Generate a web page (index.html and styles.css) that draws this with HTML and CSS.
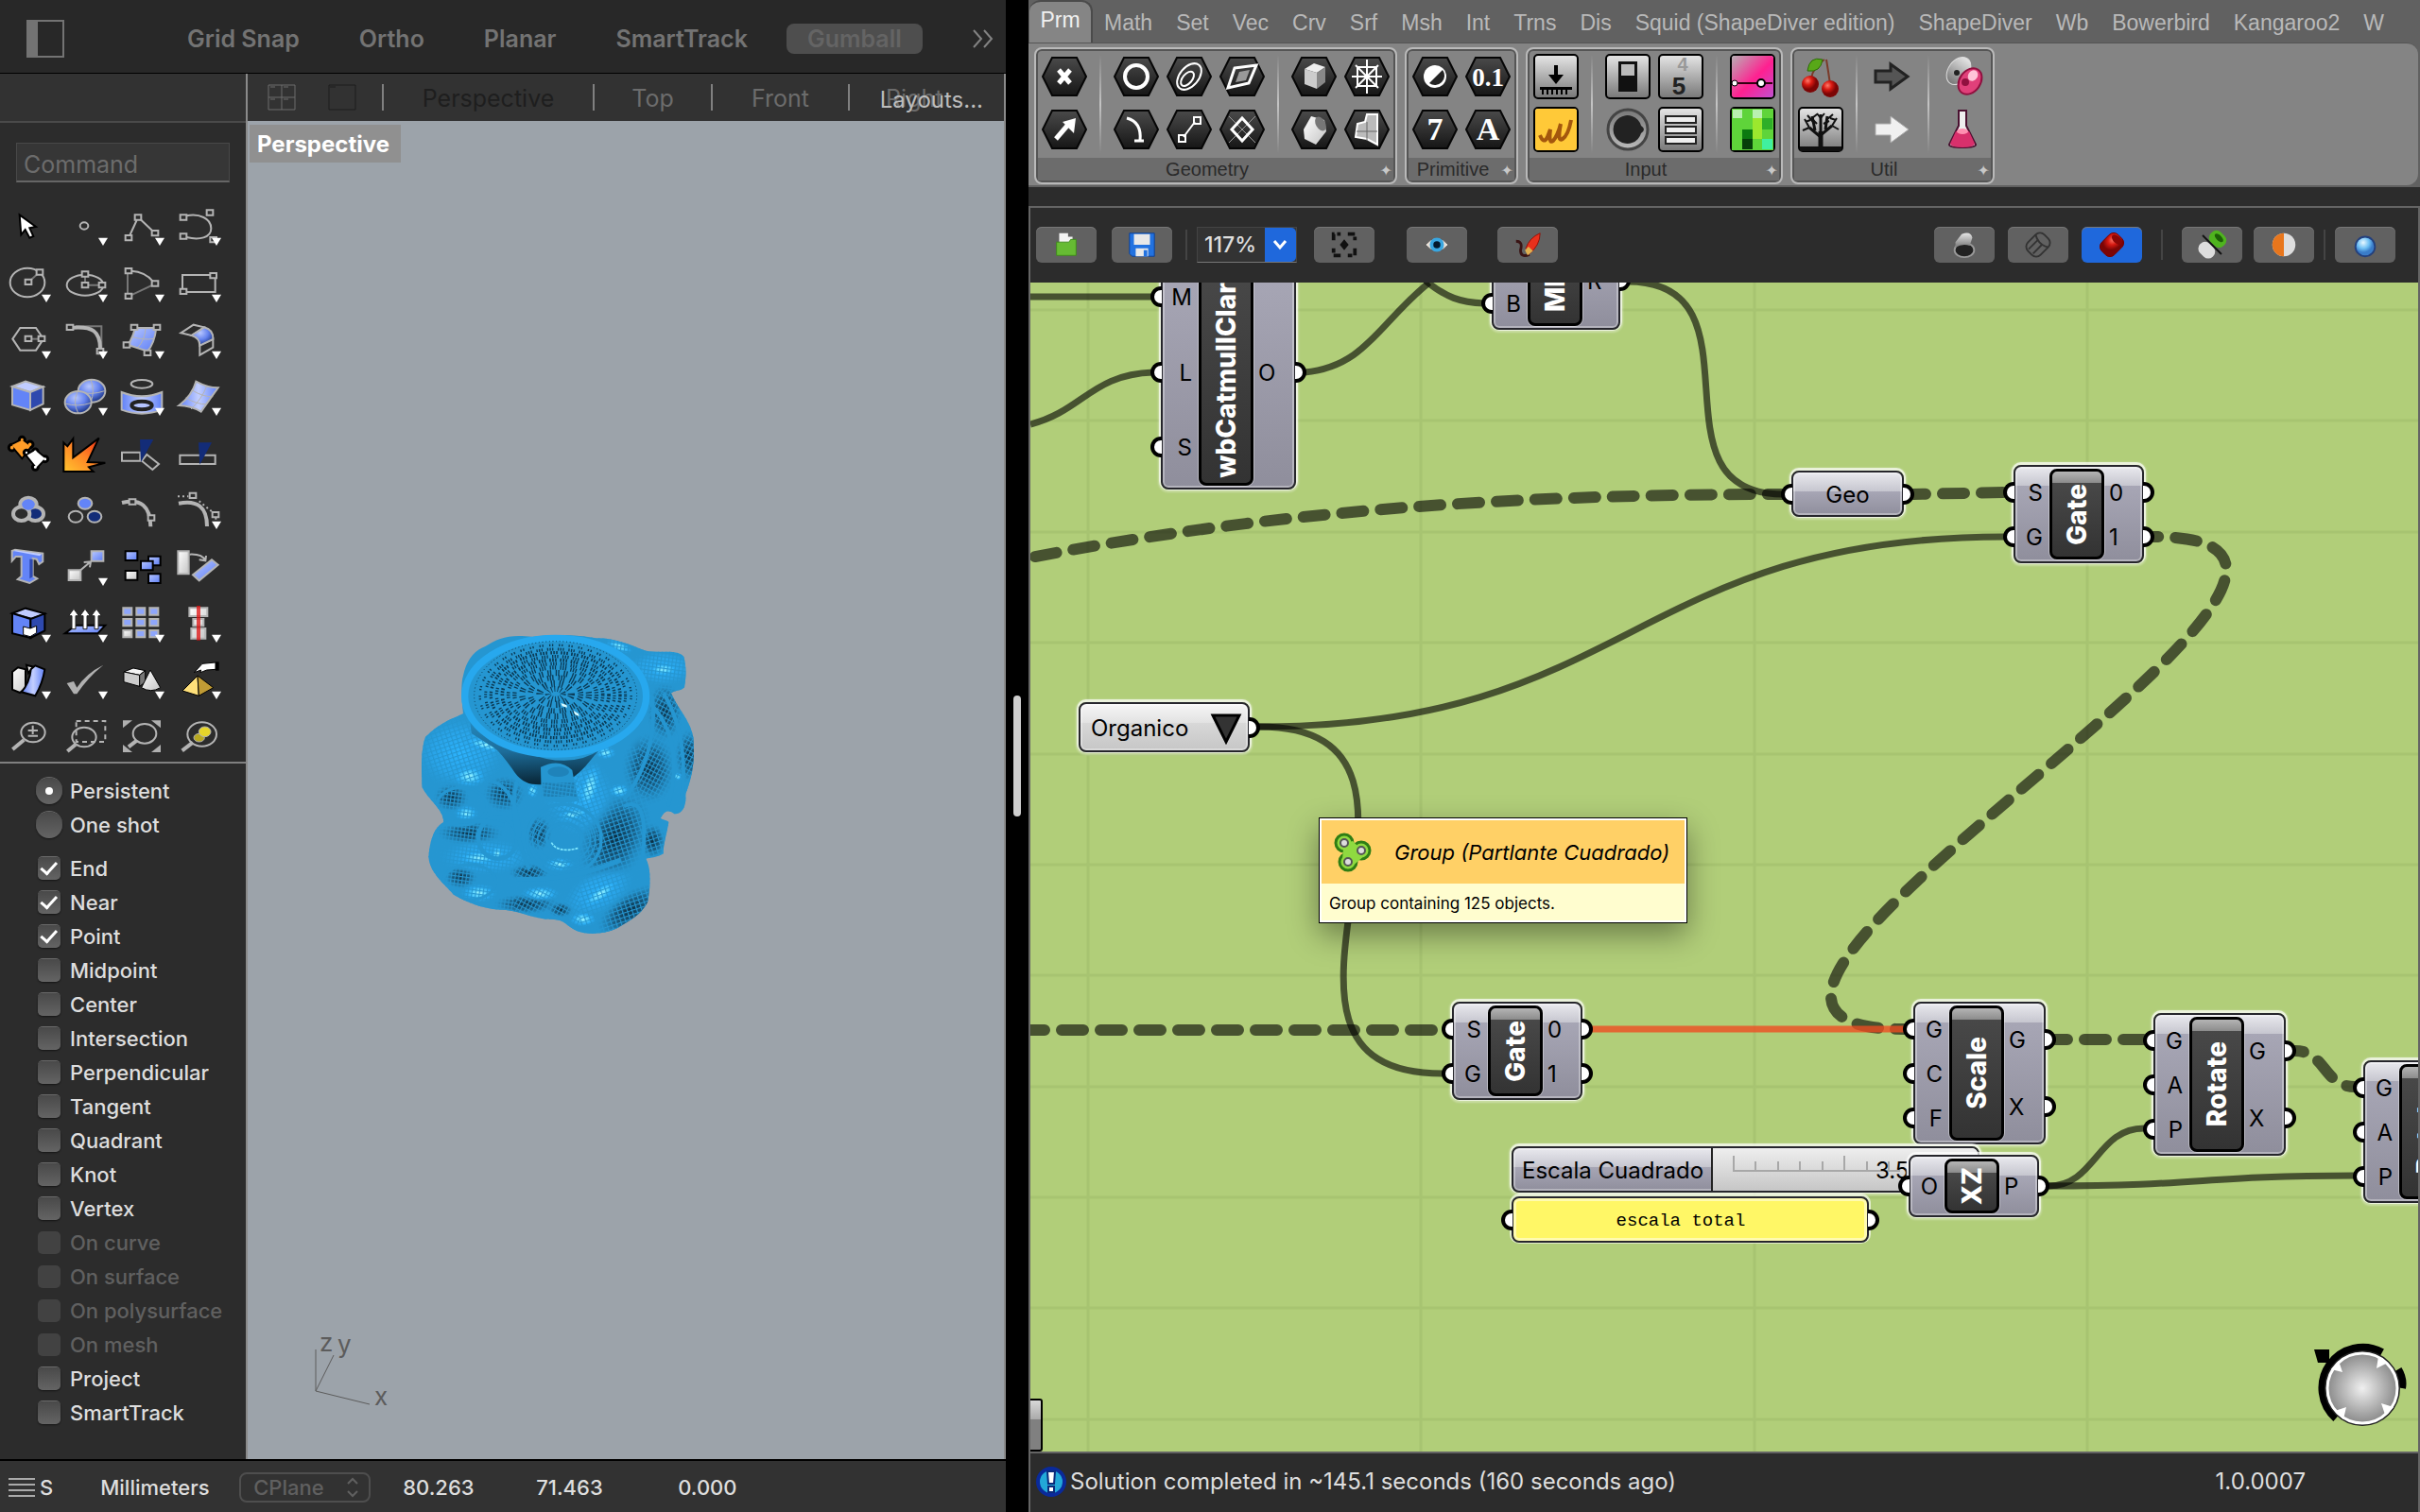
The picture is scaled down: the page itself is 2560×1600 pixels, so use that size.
FILE: index.html
```html
<!DOCTYPE html>
<html lang="en">
<head>
<meta charset="utf-8">
<title>Rhino and Grasshopper</title>
<link rel="stylesheet" href="styles.css">
</head>
<body>
<svg class="defs" aria-hidden="true">
  <defs>
    <linearGradient id="blue" x1="0" y1="0" x2="1" y2="1"><stop offset="0" stop-color="#b9c8ff"/><stop offset="1" stop-color="#5c7df5"/></linearGradient>
    <linearGradient id="blueH"><stop offset="0" stop-color="#5f80f8"/><stop offset=".5" stop-color="#c3cfff"/><stop offset="1" stop-color="#5f80f8"/></linearGradient>
    <radialGradient id="ball" cx=".4" cy=".3" r=".75"><stop offset="0" stop-color="#b9c8ff"/><stop offset=".5" stop-color="#6583ee"/><stop offset="1" stop-color="#132c78"/></radialGradient>
    <linearGradient id="fire" x1="0" y1="1" x2="1" y2="0"><stop offset="0" stop-color="#ffc62f"/><stop offset=".5" stop-color="#ff8225"/><stop offset="1" stop-color="#f02010"/></linearGradient>
    <linearGradient id="white" x1="0" y1="0" x2="1" y2="1"><stop offset="0" stop-color="#fff"/><stop offset="1" stop-color="#c4c4c4"/></linearGradient>
    <linearGradient id="steel" x1="0" y1="0" x2="0" y2="1"><stop offset="0" stop-color="#777"/><stop offset="1" stop-color="#bbb"/></linearGradient>
    <linearGradient id="steelDown" x1="0" y1="0" x2="0" y2="1"><stop offset="0" stop-color="#e6e6e6"/><stop offset="1" stop-color="#777"/></linearGradient>
    <linearGradient id="hexFill" x1="0" y1="0" x2="0" y2="1"><stop offset="0" stop-color="#4a4a4a"/><stop offset="1" stop-color="#161616"/></linearGradient>
    <linearGradient id="pink" x1="0" y1="0" x2="1" y2="1"><stop offset="0" stop-color="#b9b0b5"/><stop offset=".55" stop-color="#ff2090"/><stop offset="1" stop-color="#c050d0"/></linearGradient>
    <radialGradient id="knob"><stop offset="0" stop-color="#f0f0f0"/><stop offset="1" stop-color="#858585"/></radialGradient>
    <radialGradient id="redBall" cx=".35" cy=".3"><stop offset="0" stop-color="#ff7a6a"/><stop offset=".5" stop-color="#d81a12"/><stop offset="1" stop-color="#7c0505"/></radialGradient>
    <radialGradient id="skyBall" cx=".4" cy=".3"><stop offset="0" stop-color="#e8f8ff"/><stop offset=".6" stop-color="#6fc0f4"/><stop offset="1" stop-color="#3a7cc8"/></radialGradient>
    <path id="more" fill="#fff" d="M132 111h30l-15 25z"/>
    <path id="hex" fill="url(#hexFill)" stroke="#050505" stroke-width="2" d="M15 8h26l10 20-10 20H15L5 28z"/>
    <rect id="tile" x="5" y="5" width="46" height="46" rx="4" fill="url(#steelDown)" stroke="#000" stroke-width="2"/>
  </defs>
</svg>

<div class="desktop">
<section class="rhino" aria-label="Rhino">
  <header class="rhino-top">
    <button class="side-toggle" aria-label="Toggle sidebar"></button>
    <nav class="modes">
      <button>Grid Snap</button><button>Ortho</button><button>Planar</button><button>SmartTrack</button><button class="on">Gumball</button>
    </nav>
    <button class="chev" aria-label="More"><svg width="24" height="22" viewBox="0 0 24 22"><path d="M2 2l8 9-8 9M13 2l8 9-8 9"/></svg></button>
  </header>

  <div class="rhino-main">
    <aside class="panel">
      <div class="panel-head"></div>
      <input class="command" type="text" placeholder="Command" aria-label="Command">
      <div class="tools">
        <button aria-label="Select"><svg viewBox="0 25 180 152"><path d="M62 63l52 38-20 4 12 26-12 5-14-26-13 16z" fill="#fff" stroke="#000" stroke-width="2"/></svg></button>
        <button aria-label="Point"><svg viewBox="180 25 180 152"><ellipse cx="267" cy="98" rx="13" ry="11"/><use href="#more" x="180" y="25"/></svg></button>
        <button aria-label="Polyline"><svg viewBox="360 25 180 152"><path d="M412 128l22-48M446 78l38 36"/><path d="M428 63h20v16h-20zM398 128h20v16h-20zM482 113h20v16h-20z"/><use href="#more" x="360" y="25"/></svg></button>
        <button aria-label="Curve"><svg viewBox="540 25 180 152"><path d="M592 66c40-8 78 8 78 40 0 30-38 38-78 28"/><path d="M572 63h20v16h-20zM656 48h20v16h-20zM572 123h20v16h-20zM667 134h20v16h-20z"/><use href="#more" x="540" y="25"/></svg></button>

        <button aria-label="Circle"><svg viewBox="0 177 180 152"><ellipse cx="87" cy="250" rx="55" ry="46"/><path class="dim" d="M98 242l20-18"/><path class="bg" d="M80 240h20v16H80zM116 209h20v16h-20z"/><use href="#more" y="177"/></svg></button>
        <button aria-label="Ellipse"><svg viewBox="180 177 180 152"><ellipse cx="270" cy="258" rx="58" ry="33"/><path class="dim" d="M270 230v20M280 258h34"/><path class="bg" d="M260 215h20v16h-20zM260 250h20v16h-20zM314 250h20v16h-20z"/><use href="#more" x="180" y="177"/></svg></button>
        <button aria-label="Arc"><svg viewBox="360 177 180 152"><path class="dim" d="M405 220v66M416 290l68-32"/><path d="M416 213c32 2 56 16 70 34"/><path d="M398 205h20v16h-20zM398 285h20v16h-20zM482 245h20v16h-20z"/><use href="#more" x="360" y="177"/></svg></button>
        <button aria-label="Rectangle"><svg viewBox="540 177 180 152"><path d="M579 226h104v54H579z"/><path class="bg" d="M667 220h20v16h-20zM572 270h20v16h-20z"/><use href="#more" x="540" y="177"/></svg></button>

        <button aria-label="Polygon"><svg viewBox="0 329 180 152"><path d="M40 401l24-35h50l24 35-24 36H64z"/><path class="dim" d="M100 401h24"/><path class="bg" d="M80 392h20v16H80zM122 392h20v16h-20z"/><use href="#more" y="329"/></svg></button>
        <button aria-label="Fillet"><svg viewBox="180 329 180 152"><path class="dim" d="M240 361h82v70"/><path stroke-width="4" d="M232 365c60-4 86 10 86 68"/><path d="M212 356h20v16h-20zM308 432h20v16h-20z"/><use href="#more" x="180" y="329"/></svg></button>
        <button aria-label="Surface"><svg viewBox="360 329 180 152"><path fill="url(#blue)" d="M428 366h68q-6 50-28 74l-62-20q18-28 22-54z"/><path class="seam" d="M462 368q-2 36-26 62M418 394q40 12 70 6"/><path class="bg" d="M416 356h20v16h-20zM488 356h20v16h-20zM392 412h20v16h-20zM458 437h20v16h-20z"/><use href="#more" x="360" y="329"/></svg></button>
        <button aria-label="Blend surface"><svg viewBox="540 329 180 152"><path d="M574 382l40-26 34 8-40 26zM634 420l42-20v28l-42 24z"/><path fill="url(#ball)" d="M648 364q30 8 28 38l-42 20q0-24-26-32z"/><use href="#more" x="540" y="329"/></svg></button>

        <button aria-label="Box"><svg viewBox="0 481 180 152"><path fill="#c0ccff" d="M39 524l42-16 56 17-41 17z"/><path fill="#6384f7" d="M39 524l57 18v57l-57-17z"/><path fill="#2e49ae" d="M96 542l41-17v54l-41 20z"/><use href="#more" y="481"/></svg></button>
        <button aria-label="Solids"><svg viewBox="180 481 180 152"><ellipse cx="291" cy="538" rx="43" ry="36" fill="url(#ball)"/><path class="seam" d="M250 542q40 10 82-4M288 502q14 36 0 72"/><ellipse cx="248" cy="574" rx="42" ry="35" fill="url(#ball)"/><path class="seam" d="M207 578q40 12 82-2M246 540q-16 36 2 68"/><use href="#more" x="180" y="481"/></svg></button>
        <button aria-label="Project"><svg viewBox="360 481 180 152"><ellipse cx="450" cy="516" rx="34" ry="13"/><path fill="url(#blueH)" d="M386 542q64 26 128 0v56q-64 24-128 0z"/><ellipse cx="450" cy="584" rx="32" ry="13" fill="#b5c4ff" stroke="#222" stroke-width="4"/><use href="#more" x="360" y="481"/></svg></button>
        <button aria-label="Mesh"><svg viewBox="540 481 180 152"><path fill="url(#blueH)" d="M622 508q36 20 70 20-22 30-54 76-34-20-70-20 42-32 54-76z"/><path class="seam" d="M656 522q-14 40-50 74M610 536q36 22 66 20M590 560q36 22 66 20"/><use href="#more" x="540" y="481"/></svg></button>

        <button aria-label="Plugins"><svg viewBox="0 633 180 152"><g fill="#ff9d28" stroke="#000" stroke-width="3"><path d="M36 682l34-18 28 22-28 36z"/><circle cx="70" cy="665" r="9"/><circle cx="38" cy="690" r="10"/><circle cx="95" cy="680" r="10"/></g><path fill="#ff9d28" stroke="none" d="M38 682l32-16 26 20-26 34z"/><g fill="#fff" stroke="#000" stroke-width="3"><path d="M84 714l28-16 32 26-28 30z"/><circle cx="112" cy="702" r="8"/><circle cx="84" cy="706" r="8"/><circle cx="143" cy="726" r="9"/><circle cx="112" cy="752" r="9"/></g><path fill="#fff" stroke="none" d="M86 714l26-15 30 25-26 28z"/></svg></button>
        <button aria-label="Explode"><svg viewBox="180 633 180 152"><path fill="url(#fire)" stroke="#000" stroke-width="2" d="M202 674l12 12 18-24 0 60 82-62-36 76 56 2-52 14 14 14H202z"/></svg></button>
        <button aria-label="Trim"><svg viewBox="360 633 180 152"><path d="M387 705h58v27h-58zM466 712l38 30-20 18-34-28z"/><path class="navy" d="M444 664h43l-40 72z"/></svg></button>
        <button aria-label="Split"><svg viewBox="540 633 180 152"><path d="M571 714h112v28H571z"/><path class="navy" d="M630 674h42l-38 70z"/></svg></button>

        <button aria-label="Join"><svg viewBox="0 785 180 152"><ellipse cx="90" cy="843" rx="26" ry="22" stroke-width="4" fill="#6384f7"/><ellipse cx="112" cy="872" rx="26" ry="22" stroke-width="4" fill="#132c78"/><ellipse cx="68" cy="872" rx="26" ry="22" stroke-width="4" class="bg"/><ellipse cx="90" cy="843" rx="20" ry="17" stroke="none" fill="#6384f7"/><use href="#more" y="785"/></svg></button>
        <button aria-label="Ungroup"><svg viewBox="180 785 180 152"><ellipse cx="270" cy="839" rx="22" ry="18" fill="#6384f7"/><ellipse cx="240" cy="881" rx="22" ry="18"/><ellipse cx="300" cy="881" rx="22" ry="18" fill="#132c78"/></svg></button>
        <button aria-label="Edit points"><svg viewBox="360 785 180 152"><path stroke-width="4" d="M387 837q90-22 91 76"/><path class="bg" d="M410 826h20v16h-20zM470 877h20v16h-20z"/></svg></button>
        <button aria-label="Control points"><svg viewBox="540 785 180 152"><path stroke-width="4" d="M567 839q90-18 90 73"/><path stroke-dasharray="2 3" d="M564 817h34M632 832l44 36M685 884v12"/><path d="M602 806h20v16h-20zM674 867h20v16h-20z"/><use href="#more" x="540" y="785"/></svg></button>

        <button aria-label="Text"><svg viewBox="0 937 180 152"><path fill="#6384f7" d="M38 962l10-4 88 12 0 26-12 8-8-16-12-2v56l14 8-24 14-38-12 12-10v-62l-18 0-12 14z"/><path fill="#2e49ae" stroke="none" d="M94 988l10 0v56l-10 6z"/><path fill="#c0ccff" stroke="none" d="M42 962l8-2 82 12-6 6z"/></svg></button>
        <button aria-label="Move"><svg viewBox="180 937 180 152"><path fill="url(#white)" d="M218 1023h38v32h-38z"/><path fill="url(#blue)" d="M290 963h38v31h-38z"/><path d="M254 1024l34-28M266 998l22-2-3 18"/><use href="#more" x="180" y="937"/></svg></button>
        <button aria-label="Copy"><svg viewBox="360 937 180 152"><g stroke="#000"><path fill="url(#blue)" d="M398 963h38v29h-38z"/><path fill="url(#blue)" d="M471 979h38v29h-38z"/><path fill="url(#blue)" d="M447 994h38v29h-38z"/><path fill="url(#blue)" d="M471 1035h38v29h-38z"/><path fill="url(#white)" d="M398 1025h38v29h-38z"/></g></svg></button>
        <button aria-label="Rotate"><svg viewBox="540 937 180 152"><path fill="url(#white)" d="M565 963h34v72h-34z"/><path fill="url(#blue)" d="M612 1038l60-48 20 16-60 50z"/><path d="M602 973q40-2 50 20M632 990l20 3 2-16"/></svg></button>

        <button aria-label="Boolean"><svg viewBox="0 1089 180 152"><g stroke="#000" stroke-width="2"><path fill="#c0ccff" d="M39 1132l42-16 61 17-41 17z"/><path fill="#6384f7" d="M39 1132l58 18v60l-58-14z"/><path fill="#2e49ae" d="M97 1150l45-17v54l-45 23z"/></g><path fill="#fff" stroke="#000" stroke-width="1" d="M74 1174l22 6 20-8v22l-20 12-22-6z"/><use href="#more" y="1089"/></svg></button>
        <button aria-label="Extrude"><svg viewBox="180 1089 180 152"><path fill="url(#blue)" stroke="#000" d="M206 1196l34-26h94l-24 26z"/><path fill="#fff" stroke="#222" stroke-width="1" d="M228 1182v-42h-10l16-22 16 22h-10v42zM264 1182v-42h-10l16-22 16 22h-10v42zM300 1182v-42h-10l16-22 16 22h-10v42z"/><use href="#more" x="180" y="1089"/></svg></button>
        <button aria-label="Array"><svg viewBox="360 1089 180 152"><g fill="#8ea6fb"><path d="M391 1115h27v22h-27zM433 1115h27v22h-27zM475 1115h27v22h-27zM391 1150h27v22h-27zM433 1150h27v22h-27zM475 1150h27v22h-27zM433 1186h27v22h-27zM475 1186h27v22h-27z"/></g><path fill="url(#white)" d="M391 1186h27v22h-27z"/><use href="#more" x="360" y="1089"/></svg></button>
        <button aria-label="Align"><svg viewBox="540 1089 180 152"><path fill="url(#white)" d="M601 1115h57v26h-57zM613 1150h33v22h-33zM607 1180h45v32h-45z"/><path fill="#e01010" opacity=".75" stroke="none" d="M624 1108h12v110h-12z"/><use href="#more" x="540" y="1089"/></svg></button>

        <button aria-label="Deform"><svg viewBox="0 1241 180 152"><g stroke="#000"><path fill="url(#white)" d="M39 1290l18-14 24 6 0 60-18 14-24-10zM84 1268l22 6-16 20z"/><path fill="url(#blueH)" d="M98 1282l14-12 30 12q-6 42-30 84l-44-12q26-30 30-72z"/></g><use href="#more" y="1241"/></svg></button>
        <button aria-label="Check"><svg viewBox="180 1241 180 152"><path fill="#b0b0b0" stroke="none" d="M212 1326l22-6 10 20q30-46 84-72-50 40-84 92h-10z"/><use href="#more" x="180" y="1241"/></svg></button>
        <button aria-label="Render"><svg viewBox="360 1241 180 152"><g stroke="#000" stroke-width="1"><path fill="#f4f4f4" d="M393 1290l30-12 38 8-18 14z"/><path fill="#ccc" d="M393 1290l50 10v36l-50-14z"/><path fill="#777" d="M443 1300l18-14v36l-18 14z"/><path fill="url(#white)" d="M477 1284l32 56q-30 18-60 0z"/></g><use href="#more" x="360" y="1241"/></svg></button>
        <button aria-label="Drag"><svg viewBox="540 1241 180 152"><path fill="#ffe07a" stroke="#000" stroke-width="1" d="M627 1302l-48 48 52 16z"/><path fill="#c09b35" stroke="#000" stroke-width="1" d="M627 1302l50 38-46 26z"/><path fill="#fff" stroke="#000" stroke-width="1" d="M616 1292l26-28 42-4v22l-28 2-20 8 2-8z"/><path fill="#000" stroke="none" d="M684 1258h11v28h-11z"/><use href="#more" x="540" y="1241"/></svg></button>

        <button aria-label="Zoom dynamic"><svg viewBox="0 1393 180 152"><ellipse cx="105" cy="1454" rx="38" ry="31"/><path stroke-width="4" d="M76 1478l-36 30"/><path d="M89 1448h31M104 1432v28M89 1465h31"/></svg></button>
        <button aria-label="Zoom window"><svg viewBox="180 1393 180 152"><ellipse cx="267" cy="1469" rx="38" ry="31"/><path stroke-width="4" d="M240 1492l-26 22"/><path stroke-dasharray="5 4" d="M242 1418h92v66h-92z"/></svg></button>
        <button aria-label="Zoom extents"><svg viewBox="360 1393 180 152"><ellipse cx="459" cy="1458" rx="37" ry="31"/><path stroke-width="4" d="M434 1480l-26 20"/><path fill="#b0b0b0" stroke="none" d="M390 1416h30l-30 24zM510 1416h-30l30 24zM390 1517h30l-30-24zM510 1517h-30l30-24z"/></svg></button>
        <button aria-label="Zoom selected"><svg viewBox="540 1393 180 152"><ellipse cx="641" cy="1460" rx="46" ry="38"/><ellipse cx="632" cy="1471" rx="17" ry="13" fill="#b8a820" stroke-width="1"/><ellipse cx="650" cy="1452" rx="19" ry="16" fill="#e6d52a" stroke-width="1"/><path stroke-width="4" d="M612 1486l-34 26"/></svg></button>
      </div>

      <div class="snaps">
        <label><input type="radio" name="persist" checked>Persistent</label>
        <label><input type="radio" name="persist">One shot</label>
      </div>
      <div class="snaps">
        <label><input type="checkbox" checked>End</label>
        <label><input type="checkbox" checked>Near</label>
        <label><input type="checkbox" checked>Point</label>
        <label><input type="checkbox">Midpoint</label>
        <label><input type="checkbox">Center</label>
        <label><input type="checkbox">Intersection</label>
        <label><input type="checkbox">Perpendicular</label>
        <label><input type="checkbox">Tangent</label>
        <label><input type="checkbox">Quadrant</label>
        <label><input type="checkbox">Knot</label>
        <label><input type="checkbox">Vertex</label>
        <label class="off"><input type="checkbox" disabled>On curve</label>
        <label class="off"><input type="checkbox" disabled>On surface</label>
        <label class="off"><input type="checkbox" disabled>On polysurface</label>
        <label class="off"><input type="checkbox" disabled>On mesh</label>
        <label><input type="checkbox">Project</label>
        <label><input type="checkbox">SmartTrack</label>
      </div>
    </aside>

    <div class="view">
      <nav class="views">
        <button class="ico" aria-label="Four views"><svg width="30" height="28" viewBox="0 0 30 28"><path d="M1 1h28v26H1zM15 1v26M1 14h28M3 3h5M17 3h5M3 16h5M17 16h5"/></svg></button>
        <button class="ico dark" aria-label="Single view"><svg width="30" height="28" viewBox="0 0 30 28"><path d="M1 1h28v26H1zM2 3h6"/></svg></button>
        <button class="tab current">Perspective</button>
        <button class="tab top">Top</button>
        <button class="tab front">Front</button>
        <button class="tab right">Right</button>
        <button class="layouts">Layouts...</button>
      </nav>
      <div class="viewport">
        <span class="view-name">Perspective</span>
        <svg class="model" viewBox="0 0 1140 1140" role="img" aria-label="Organic planter mesh">
          <defs>
            <pattern id="m1" width="12" height="12" patternUnits="userSpaceOnUse" patternTransform="rotate(8)"><path d="M0 0h12M0 0v12" stroke="#2596d1" stroke-width="7" fill="none"/></pattern>
            <pattern id="m2" width="12" height="14" patternUnits="userSpaceOnUse" patternTransform="rotate(28)"><path d="M0 0h12M0 0v14" stroke="#2596d1" stroke-width="7" fill="none"/></pattern>
            <pattern id="m3" width="15" height="13" patternUnits="userSpaceOnUse" patternTransform="rotate(-18)"><path d="M0 0h15M0 0v13" stroke="#2596d1" stroke-width="7" fill="none"/></pattern>
            <radialGradient id="hi"><stop offset="0" stop-color="#a0f8ff"/><stop offset=".3" stop-color="#60d8ff"/><stop offset=".6" stop-color="#2bb0fa" stop-opacity=".8"/><stop offset="1" stop-color="#2596d1" stop-opacity="0"/></radialGradient>
            <radialGradient id="swell"><stop offset="0" stop-color="#2cb4ff"/><stop offset=".6" stop-color="#2ba9f0" stop-opacity=".7"/><stop offset="1" stop-color="#2596d1" stop-opacity="0"/></radialGradient>
            <radialGradient id="lo"><stop offset="0" stop-color="#0a2c40"/><stop offset=".5" stop-color="#164f70" stop-opacity=".8"/><stop offset="1" stop-color="#2596d1" stop-opacity="0"/></radialGradient>
            <linearGradient id="cone" x1="0" y1="0" x2=".1" y2="1"><stop offset="0" stop-color="#2488bd"/><stop offset=".5" stop-color="#1d6d9a"/><stop offset="1" stop-color="#0a2a3c"/></linearGradient>
            <clipPath id="body"><path d="M270 345C265 300 262 250 270 225 280 175 305 145 340 132 380 105 420 92 490 102 560 92 640 96 690 106 750 104 800 128 850 146 900 155 950 140 970 165 980 200 976 240 972 262 960 275 940 272 930 280 950 330 990 365 1000 420 1006 480 1000 540 976 600 978 640 968 662 940 664 928 652 910 650 900 672 888 682 910 680 922 690 918 720 905 760 905 790 885 803 860 803 850 806 868 840 864 900 855 945 830 990 800 1000 760 1026 710 1050 650 1048 620 1030 590 1010 585 998 545 998 500 998 460 975 400 968 350 970 290 950 240 920 200 875 165 850 160 800 165 740 180 705 208 690 208 650 160 620 140 580 137 530 135 460 150 420 180 390 210 370 250 355 270 345z"/></clipPath>
          </defs>
          <g clip-path="url(#body)">
            <rect width="1140" height="1140" fill="#2596d1"/>
            <g fill="url(#lo)">
              <ellipse cx="232" cy="612" rx="60" ry="48"/><ellipse cx="750" cy="740" rx="110" ry="170" transform="rotate(25 750 740)"/><ellipse cx="860" cy="520" rx="90" ry="120"/><ellipse cx="985" cy="480" rx="46" ry="90"/><ellipse cx="400" cy="600" rx="70" ry="60"/><ellipse cx="262" cy="865" rx="56" ry="40"/><ellipse cx="800" cy="970" rx="130" ry="60" transform="rotate(-35 800 970)"/><ellipse cx="290" cy="725" rx="110" ry="40"/><ellipse cx="910" cy="340" rx="60" ry="100"/><ellipse cx="510" cy="725" rx="44" ry="60"/><ellipse cx="870" cy="750" rx="46" ry="60"/><ellipse cx="470" cy="950" rx="110" ry="34"/><ellipse cx="580" cy="968" rx="44" ry="26"/><ellipse cx="480" cy="850" rx="70" ry="30"/>
            </g>
            <g fill="url(#swell)">
              <ellipse cx="260" cy="470" rx="150" ry="120"/><ellipse cx="640" cy="610" rx="120" ry="130"/><ellipse cx="340" cy="800" rx="150" ry="60"/><ellipse cx="700" cy="910" rx="130" ry="70" transform="rotate(-30 700 910)"/><ellipse cx="900" cy="200" rx="110" ry="60"/>
            </g>
            <g fill="url(#hi)">
              <ellipse cx="290" cy="545" rx="60" ry="38"/><ellipse cx="340" cy="445" rx="80" ry="22" transform="rotate(14 340 445)"/><ellipse cx="280" cy="662" rx="42" ry="28"/><ellipse cx="320" cy="803" rx="74" ry="26"/><ellipse cx="378" cy="790" rx="22" ry="30"/><ellipse cx="320" cy="915" rx="62" ry="32"/><ellipse cx="515" cy="917" rx="66" ry="26"/><ellipse cx="575" cy="824" rx="52" ry="24"/><ellipse cx="672" cy="580" rx="34" ry="90" transform="rotate(14 672 580)"/><ellipse cx="620" cy="665" rx="60" ry="22" transform="rotate(-12 620 665)"/><ellipse cx="705" cy="918" rx="80" ry="26" transform="rotate(-36 705 918)"/><ellipse cx="650" cy="998" rx="48" ry="26"/><ellipse cx="905" cy="205" rx="56" ry="24"/><ellipse cx="765" cy="132" rx="50" ry="18" transform="rotate(22 765 132)"/><ellipse cx="722" cy="470" rx="36" ry="22"/><ellipse cx="765" cy="590" rx="36" ry="24"/><ellipse cx="490" cy="590" rx="20" ry="26"/><ellipse cx="950" cy="545" rx="18" ry="14"/>
            </g>
            <path fill="url(#m1)" d="M0 560h430v580H0zM640 100h400v170H640z"/>
            <path fill="url(#m2)" d="M430 500h210v640H430zM830 270h310v340H830z"/>
            <path fill="url(#m3)" d="M640 450h190v690H640zM830 610h310v530H830zM0 340h430v220H0z"/>
            <g fill="none" stroke="#2596d1" stroke-width="5">
              <ellipse cx="590" cy="745" rx="118" ry="112" stroke-width="10"/><ellipse cx="590" cy="745" rx="100" ry="90"/><ellipse cx="590" cy="745" rx="84" ry="72"/><ellipse cx="590" cy="740" rx="56" ry="46" stroke-width="10"/><ellipse cx="380" cy="740" rx="62" ry="66" stroke-width="14"/><ellipse cx="265" cy="640" rx="80" ry="60" stroke-width="9"/><ellipse cx="290" cy="880" rx="84" ry="56" stroke-width="9"/><path d="M440 560q-30 120 40 280M780 640q80-40 60 160M360 560q80 20 90 180M850 300q130 120 70 340M905 280q80 130 60 330M870 290q20 180-90 330" stroke-width="12"/><path d="M440 870q170 10 330-60M400 700q-90-30-200 0" stroke-width="14"/>
            </g>
            <path d="M550 755q20 34 84 18" fill="none" stroke="#7fe8ff" stroke-width="5" stroke-dasharray="9 3"/>
          </g>
          <path fill="url(#cone)" d="M292 370Q560 560 705 460C680 480 660 520 622 545Q570 575 500 570 455 570 425 520 390 470 370 455L296 408z"/>
          <path fill="#2596d1" d="M516 515q60-30 100 10 10 60 22 96-60 20-120-10z"/><path fill="#1b6c9a" opacity=".6" d="M522 565h100l8 44H524z"/><path fill="url(#m1)" d="M520 560h110v55H520z"/><ellipse cx="572" cy="530" rx="34" ry="16" fill="#1f83ba"/>
          <ellipse cx="563" cy="290" rx="288" ry="184" fill="#2596d1" stroke="#27a8ee" stroke-width="22"/>
          <g fill="none" stroke="#0b3b56">
            <ellipse cx="563" cy="283" rx="24" ry="16" stroke-width="18" stroke-dasharray="3 7"/>
            <ellipse cx="563" cy="283" rx="50" ry="33" stroke-width="22" stroke-dasharray="4 4 4 14"/>
            <ellipse cx="563" cy="284" rx="80" ry="53" stroke-width="17" stroke-dasharray="4 4 4 4 4 16"/>
            <ellipse cx="563" cy="285" rx="106" ry="69" stroke-width="19" stroke-dasharray="4 4 4 14"/>
            <ellipse cx="563" cy="285" rx="130" ry="86" stroke-width="13" stroke-dasharray="4 4 4 4 4 13"/>
            <ellipse cx="563" cy="286" rx="150" ry="99" stroke-width="11" stroke-dasharray="4 4 4 4 4 12"/>
            <ellipse cx="563" cy="286" rx="169" ry="111" stroke-width="11" stroke-dasharray="5 4 5 4 5 11"/>
            <ellipse cx="563" cy="287" rx="187" ry="123" stroke-width="10" stroke-dasharray="4 4 4 4 4 13"/>
            <ellipse cx="563" cy="287" rx="205" ry="135" stroke-width="10" stroke-dasharray="5 4 5 4 5 10"/>
            <ellipse cx="563" cy="288" rx="222" ry="147" stroke-width="9" stroke-dasharray="4 4 4 4 4 14"/>
            <ellipse cx="563" cy="288" rx="240" ry="160" stroke-width="7" stroke-dasharray="4 5 4 18"/>
            <ellipse cx="563" cy="288" rx="258" ry="172" stroke-width="3" stroke-dasharray="3 8"/>
          </g>
          <path fill="#d8fbff" d="M580 312l18 6 2 8-16-4zM620 336l16 10 2 8-14-6z"/>
        </svg>
        <svg class="axes" viewBox="0 0 90 90" role="img" aria-label="World axes"><path d="M8 24v44M8 68L27 30M8 68l57 14"/><text x="12" y="26">z</text><text x="31" y="28">y</text><text x="70" y="83">x</text></svg>
      </div>
    </div>
  </div>

  <footer class="rhino-status">
    <button class="burger" aria-label="Layers"><i></i><i></i><i></i><i></i></button>
    <span class="s">S</span><span class="units">Millimeters</span>
    <label class="cplane"><select aria-label="Construction plane"><option>CPlane</option></select><svg width="14" height="22" viewBox="0 0 14 22"><path d="M2 7l5-5 5 5M2 15l5 5 5-5"/></svg></label>
    <span class="n1">80.263</span><span class="n2">71.463</span><span>0.000</span>
  </footer>
</section>

<div class="divider"><span></span></div>

<section class="gh" aria-label="Grasshopper">
  <div class="ribbon">
    <nav class="ribbon-tabs">
      <button class="active">Prm</button><button>Math</button><button>Set</button><button>Vec</button><button>Crv</button><button>Srf</button><button>Msh</button><button>Int</button><button>Trns</button><button>Dis</button><button>Squid (ShapeDiver edition)</button><button>ShapeDiver</button><button>Wb</button><button>Bowerbird</button><button>Kangaroo2</button><button>W</button>
    </nav>
    <div class="groups">
      <div class="group">
        <div class="icons">
          <div class="pair"><svg viewBox="0 0 56 56"><use href="#hex"/><path class="w w5" d="M22 21l12 14M34 21L22 35"/></svg><svg viewBox="0 0 56 56"><use href="#hex"/><path class="w w5" d="M19 38l12-14"/><path fill="#fff" d="M26 20l14-4-2 16z"/></svg></div>
          <hr>
          <div class="pair"><svg viewBox="0 0 56 56"><use href="#hex"/><circle class="w w4" cx="28" cy="28" r="12"/></svg><svg viewBox="0 0 56 56"><use href="#hex"/><path class="w w3" d="M18 16q16 4 14 24M26 40h10"/></svg></div>
          <div class="pair"><svg viewBox="0 0 56 56"><use href="#hex"/><g class="w" transform="rotate(-50 28 28)"><ellipse cx="28" cy="28" rx="16" ry="10"/><ellipse cx="25" cy="28" rx="9" ry="5"/></g></svg><svg viewBox="0 0 56 56"><use href="#hex"/><path class="w" d="M22 36l12-16M17 34h7v7h-7zM33 15h7v7h-7z"/></svg></div>
          <div class="pair"><svg viewBox="0 0 56 56"><use href="#hex"/><path class="w w3" d="M20 19l23-3-8 19-22 5z"/><path fill="#999" d="M25 23l11-2-4 11-11 2z"/></svg><svg viewBox="0 0 56 56"><use href="#hex"/><path stroke="#999" d="M14 14l28 28M42 14L14 42"/><path class="w w3" d="M28 16l11 12-11 12-11-12z"/></svg></div>
          <hr>
          <div class="pair"><svg viewBox="0 0 56 56"><use href="#hex"/><path fill="#eee" d="M18 20l10-6 12 4-9 6z"/><path fill="#ccc" d="M18 20l13 4v17l-13-5z"/><path fill="#888" d="M31 24l9-6v16l-9 7z"/></svg><svg viewBox="0 0 56 56"><use href="#hex"/><path fill="url(#white)" d="M17 28l8-14 14 4 2 12-11 14-12-6z"/><ellipse cx="35" cy="22" rx="5" ry="8" fill="#777" transform="rotate(-30 35 22)"/></svg></div>
          <div class="pair"><svg viewBox="0 0 56 56"><use href="#hex"/><path class="w" d="M18 18h20v20H18zM28 10v36M12 28h32M16 16l24 24M40 16L16 40"/></svg><svg viewBox="0 0 56 56"><use href="#hex"/><path fill="#bbb" stroke="#fff" stroke-width="2" d="M18 22l8-2 2-8h11v32l-11-6-12-2z"/><path stroke="#666" fill="none" d="M28 20v20M17 30h22"/></svg></div>
        </div>
        <div class="caption">Geometry</div>
      </div>
      <div class="group">
        <div class="icons">
          <div class="pair"><svg viewBox="0 0 56 56"><use href="#hex"/><circle cx="28" cy="28" r="12" fill="#fff"/><path fill="#222" d="M36 21A10 10 0 0 1 22 35z"/></svg><svg viewBox="0 0 56 56"><use href="#hex"/><text class="glyph" x="28" y="39">7</text></svg></div>
          <div class="pair"><svg viewBox="0 0 56 56"><use href="#hex"/><text class="glyph small" x="28" y="38">0.1</text></svg><svg viewBox="0 0 56 56"><use href="#hex"/><text class="glyph" x="28" y="39">A</text></svg></div>
        </div>
        <div class="caption">Primitive</div>
      </div>
      <div class="group">
        <div class="icons">
          <div class="pair"><svg viewBox="0 0 56 56"><use href="#tile"/><path d="M26 16h4v10h6L28 36 20 26h6zM11 39h34v3H11zM13 42h2v5h-2zM18 42h2v5h-2zM23 42h2v5h-2zM28 42h2v5h-2zM33 42h2v5h-2zM38 42h2v5h-2z"/></svg><svg viewBox="0 0 56 56"><use href="#tile"/><rect x="6" y="6" width="44" height="44" rx="3" fill="#ffc938"/><path fill="none" stroke="#a4570d" stroke-width="4" d="M11 34q4 10 8 2l3-8q-2 16 3 12 5-6 8-18-4 20 2 16 6-4 9-20"/></svg></div>
          <hr>
          <div class="pair"><svg viewBox="0 0 56 56"><use href="#tile"/><rect x="18" y="12" width="20" height="32" fill="#111"/><rect x="21" y="15" width="14" height="12" fill="#bbb"/></svg><svg viewBox="0 0 56 56"><circle cx="28" cy="28" r="21" fill="url(#steel)" stroke="#444" stroke-width="3"/><path fill="#222" d="M42 24q6 4 0 8A15 15 0 1 1 42 24z"/></svg></div>
          <div class="pair"><svg viewBox="0 0 56 56"><use href="#tile"/><text class="dial" x="30" y="22">4</text><text class="dial lower" x="26" y="47">5</text></svg><svg viewBox="0 0 56 56"><use href="#tile"/><path fill="#eee" stroke="#222" stroke-width="2" d="M12 14h32v7H12zM12 25h32v7H12zM12 36h32v7H12z"/></svg></div>
          <hr>
          <div class="pair"><svg viewBox="0 0 56 56"><use href="#tile"/><rect x="6" y="6" width="44" height="44" rx="3" fill="url(#pink)"/><path stroke="#301" stroke-width="2" d="M7 35h42"/><circle cx="9" cy="35" r="3" fill="#fff" stroke="#000"/><circle cx="37" cy="35" r="4" fill="#fff" stroke="#000" stroke-width="2"/></svg><svg viewBox="0 0 56 56"><use href="#tile"/><path fill="#5fd43a" d="M6 6h44v44H6z"/><path fill="#b9f0b0" d="M7 7h10v9H7zM28 7h10v9H28z"/><path fill="#0b7a10" d="M17 28h11v10H17z"/><path fill="#2fae28" d="M38 16h11v12H38z"/><path fill="#9be82e" d="M28 16h10v22H28z"/><path fill="#063f0a" d="M17 38h11v11H17z"/><path fill="#40f0a0" d="M38 38h11v11H38z"/></svg></div>
        </div>
        <div class="caption">Input</div>
      </div>
      <div class="group">
        <div class="icons">
          <div class="pair"><svg viewBox="0 0 56 56"><path fill="none" stroke="#7a3b2a" stroke-width="2" d="M32 10q-12 8-14 20M34 10q2 12 4 26"/><path fill="#58a818" stroke="#2c6a08" d="M30 10q-14-4-16 12 14 2 16-12z"/><circle cx="17" cy="36" r="9" fill="url(#redBall)"/><circle cx="38" cy="41" r="9" fill="url(#redBall)"/></svg><svg viewBox="0 0 56 56"><use href="#tile"/><path fill="#111" d="M6 46h44v5H6z"/><path fill="none" stroke="#111" stroke-width="5" d="M28 48V30"/><g fill="none" stroke="#111"><path stroke-width="3" d="M28 36L16 26M28 34l12-10M28 32V12M22 29l-3-15M33 28l2-14"/><path stroke-width="2" d="M16 26l-5-9M16 26l-7 3M12 20l5-2M40 24l5-8M40 24l7 4M44 18l-6-2M20 20l-6-7M19 16l5-4M34 18l7-6M28 16l-4-5M28 16l4-5M24 22l-4-4M31 22l6-3"/></g></svg></div>
          <hr>
          <div class="pair"><svg viewBox="0 0 56 56"><path fill="#555" stroke="#222" stroke-width="3" d="M10 22h16v-7l18 13-18 13v-7H10z"/></svg><svg viewBox="0 0 56 56"><path fill="#f0f0f0" stroke="#aaa" d="M10 22h16v-8l19 14-19 14v-8H10z"/></svg></div>
          <hr>
          <div class="pair"><svg viewBox="0 0 56 56"><ellipse cx="22" cy="22" rx="11" ry="16" transform="rotate(35 22 22)" fill="url(#steelDown)" stroke="#ddd"/><circle cx="20" cy="24" r="3" fill="#222"/><ellipse cx="34" cy="33" rx="11" ry="15" transform="rotate(35 34 33)" fill="#e0407a" stroke="#90103f" stroke-width="2"/><ellipse cx="37" cy="27" rx="5" ry="6" transform="rotate(35 37 27)" fill="#ffc4d8"/><circle cx="29" cy="34" r="4" fill="#90103f"/></svg><svg viewBox="0 0 56 56"><path fill="#eee" stroke="#4a1030" stroke-width="2" d="M22 8h8v16l10 20q0 3-14 3t-14-3l10-20z"/><path fill="#d8306c" d="M19 30h14l6 13q-1 4-13 4t-13-4z"/><ellipse cx="26" cy="30" rx="6" ry="3" fill="#ff8fb0"/></svg></div>
        </div>
        <div class="caption">Util</div>
      </div>
    </div>
  </div>

  <div class="gh-body">
    <div class="gh-tools">
      <button aria-label="Open"><svg viewBox="0 0 34 34"><path fill="#f4f4f4" d="M9 4h10v4h5v12H9z"/><path fill="#66bb33" stroke="#3e8a1c" d="M6 14h14l2-3h6v18H6z"/></svg></button>
      <button aria-label="Save"><svg viewBox="0 0 34 34"><path fill="#2272e0" stroke="#0e3f90" d="M3 4h28v26H6l-3-3z"/><path fill="#e8e8e8" d="M8 5h18v12H8zM10 21h14v9H10z"/><path fill="#2272e0" d="M19 23h4v7h-4z"/></svg></button>
      <i class="bar"></i>
      <div class="zoombox"><input type="text" value="117%" aria-label="Zoom"><button aria-label="Zoom levels"><svg width="18" height="12" viewBox="0 0 18 12"><path d="M3 2l6 7 6-7"/></svg></button></div>
      <button class="fit" aria-label="Zoom extents"><svg viewBox="0 0 34 34"><path fill="none" stroke="#111" stroke-width="4" stroke-dasharray="8 3" d="M5 12V5h8M21 5h8v7M29 21v8h-8M13 29H5v-8"/><path fill="#111" d="M17 11l5 6-5 6-5-6z"/></svg></button>
      <button class="eye" aria-label="Preview"><svg viewBox="0 0 34 34"><path fill="#e8e0d8" stroke="#555" d="M4 17q13-15 26 0-13 15-26 0z"/><circle cx="17" cy="17" r="8" fill="#39a6e0"/><circle cx="17" cy="17" r="4" fill="#04182c"/></svg></button>
      <button class="sketch" aria-label="Sketch"><svg viewBox="0 0 34 34"><path fill="none" stroke="#3a1414" stroke-width="3" d="M4 13q8 0 5 10 0 9 10 5"/><path fill="#e8301c" stroke="#901008" d="M31 4q0 14-13 24l-3-7q4-12 16-17z"/><path fill="#e0b050" d="M18 19l5 5-6 5-3-6z"/></svg></button>
      <span class="grow"></span>
      <button aria-label="No preview"><svg viewBox="0 0 34 34"><ellipse cx="17" cy="23" rx="11" ry="8" fill="#222" stroke="#999" stroke-width="2"/><path fill="url(#steelDown)" d="M7 14l7-9q10-4 12 4l-3 9q-8-3-16 2z"/></svg></button>
      <button class="gap" aria-label="Wireframe preview"><svg viewBox="0 0 34 34"><g transform="rotate(45 17 17)"><rect x="7" y="4" width="20" height="26" rx="7" fill="none" stroke="#333" stroke-width="2"/><path fill="none" stroke="#333" stroke-width="2" d="M7 11q10 6 20 0M13 14v14M20 14v14"/></g></svg></button>
      <button class="gap chosen" aria-label="Shaded preview"><svg viewBox="0 0 34 34"><g transform="rotate(45 17 17)"><rect x="7" y="4" width="20" height="26" rx="7" fill="url(#redBall)" stroke="#700"/><ellipse cx="17" cy="9" rx="7" ry="4" fill="#8a0606"/></g></svg></button>
      <i class="bar wide"></i>
      <button aria-label="Selected preview"><svg viewBox="0 0 34 34"><g transform="rotate(45 17 17)"><rect x="7" y="0" width="20" height="16" rx="7" fill="#4fb41e"/><ellipse cx="17" cy="6" rx="6" ry="3" fill="#1d5f06"/><rect x="7" y="18" width="20" height="15" rx="7" fill="#ddd"/><path stroke="#111" stroke-width="2" d="M2 17h30"/></g></svg></button>
      <button class="near" aria-label="Document preview"><svg viewBox="0 0 34 34"><circle cx="17" cy="17" r="13" fill="#ddd"/><path fill="#e8761c" d="M17 4a13 13 0 0 0 0 26z"/></svg></button>
      <i class="bar tight"></i>
      <button aria-label="Mesh quality"><svg viewBox="0 0 34 34"><circle cx="17" cy="19" r="11" fill="url(#skyBall)" stroke="#24407c" stroke-width="2"/></svg></button>
    </div>

    <div class="canvas">
      <svg class="wires" width="1468" height="1237" viewBox="1090 299 1468 1237" aria-hidden="true">
        <path class="grid" d="M1151 299v1237M1503 299v1237M1856 299v1237M2208 299v1237M1090 328h1468M1090 445h1468M1090 563h1468M1090 680h1468M1090 798h1468M1090 915h1468M1090 1032h1468M1090 1150h1468M1090 1267h1468M1090 1384h1468M1090 1502h1468"/>
        <g class="wire">
          <path d="M1090 314h130"/>
          <path d="M1090 449C1145 435 1155 396 1220 394"/>
          <path d="M1380 394C1445 388 1460 340 1512 299"/>
          <path d="M1508 297C1530 315 1545 320 1570 321"/>
          <path d="M1722 298C1872 298 1738 523 1886 523"/>
          <path d="M1332 769C1726 769 1726 568 2121 568"/>
          <path d="M1332 769C1577 769 1281 1136 1526 1136"/>
          <path d="M2167 1255C2217 1255 2218 1194 2268 1194"/>
          <path d="M2167 1255C2330 1255 2330 1244 2491 1244"/>
        </g>
        <g class="dashed">
          <path stroke-dashoffset="36" d="M1090 590C1350 540 1600 523 1886 523"/>
          <path stroke-dashoffset="10" d="M2024 523L2121 521"/>
          <path stroke-dashoffset="18" d="M2278 568C2625 568 1667 1089 2014 1089"/>
          <path stroke-dashoffset="8" d="M1090 1090h436"/>
          <path stroke-dashoffset="10" d="M2174 1100h94"/>
          <path stroke-dashoffset="14" d="M2428 1112C2460 1112 2458 1150 2491 1150"/>
        </g>
        <path class="hot" d="M1684 1089h331"/>
      </svg>

      <div class="node n-wb"><div class="in"><b>M</b><b>L</b><b>S</b></div><div class="name"><span>wbCatmullClark</span></div><div class="out"><b>O</b></div></div>
      <div class="node n-mesh"><div class="in"><b>A</b><b>B</b></div><div class="name"><span>MDif</span></div><div class="out"><b>R</b></div></div>
      <div class="node n-geo"><div class="in"><b></b></div><span class="plain">Geo</span><div class="out"><b></b></div></div>
      <div class="node n-gate1"><div class="in"><b>S</b><b>G</b></div><div class="name"><span>Gate</span></div><div class="out"><b>0</b><b>1</b></div></div>
      <div class="node n-list"><select aria-label="Mode"><option>Organico</option></select><svg width="34" height="34" viewBox="0 0 34 34"><path d="M3 3h28L17 31z"/></svg><div class="out"><b></b></div></div>
      <div class="node n-gate2"><div class="in"><b>S</b><b>G</b></div><div class="name"><span>Gate</span></div><div class="out"><b>0</b><b>1</b></div></div>
      <div class="node n-scale"><div class="in"><b>G</b><b>C</b><b>F</b></div><div class="name"><span>Scale</span></div><div class="out"><b>G</b><b>X</b></div></div>
      <div class="node n-slider"><span class="slider-name">Escala Cuadrado</span><div class="track"><svg width="180" height="20" viewBox="0 0 180 20" aria-hidden="true"><path d="M2 0v16h176M25 6v10M49 6v10M72 6v10M96 6v10M119 0v16M143 6v10M166 6v10"/></svg><output>3.5</output></div></div>
      <div class="node n-panel"><div class="in"><b></b></div><span class="plain">escala total</span><div class="out"><b></b></div></div>
      <div class="node n-xz"><div class="in"><b>O</b></div><div class="name"><span>XZ</span></div><div class="out"><b>P</b></div></div>
      <div class="node n-rotate"><div class="in"><b>G</b><b>A</b><b>P</b></div><div class="name"><span>Rotate</span></div><div class="out"><b>G</b><b>X</b></div></div>
      <div class="node n-rotate2"><div class="in"><b>G</b><b>A</b><b>P</b></div><div class="name"><span>Rotate</span></div></div>
      <div class="node n-edge"></div>

      <div class="tip" role="tooltip">
        <div class="tip-head"><svg width="44" height="44" viewBox="0 0 44 44"><g fill="#8fda40" stroke="#2f7d14" stroke-width="3"><circle cx="13" cy="12" r="9"/><circle cx="31" cy="20" r="9"/><circle cx="17" cy="32" r="9"/></g><path fill="#8fda40" d="M8 14l14-4 14 14-16 14-9-8 1-12z"/><g fill="#ddd" stroke="#555" stroke-width="2"><circle cx="13" cy="12" r="4"/><circle cx="31" cy="20" r="4"/><circle cx="17" cy="32" r="4"/></g></svg><em>Group (Partlante Cuadrado)</em></div>
        <p>Group containing 125 objects.</p>
      </div>

      <svg class="compass" viewBox="2440 1412 110 110" role="img" aria-label="Canvas compass">
        <path d="M2448 1428l16 0 0 14-12 0z"/>
        <path fill="none" stroke="#000" stroke-width="8" d="M2471 1501A43 43 0 0 1 2520 1431M2537 1449q6 10 4 20"/>
        <circle cx="2499" cy="1469" r="39" fill="url(#knob)" stroke="#222" stroke-width="2"/>
        <circle cx="2499" cy="1469" r="37" fill="none" stroke="#fff" stroke-width="3"/>
        <path fill="#fff" d="M2466 1449l12 3-4-12zM2532 1489l-13-4 4 12zM2514 1448l2-13 8 8zM2482 1489l-12 4 9 9z"/>
      </svg>
    </div>

    <footer class="gh-status">
      <svg width="32" height="32" viewBox="0 0 32 32" aria-hidden="true"><circle cx="16" cy="16" r="14" fill="#22a8d8" stroke="#0a2a9a" stroke-width="4"/><path fill="#fff" stroke="#0a2a7a" stroke-width="2" d="M12 5h8l-1 13h-6zM13 21h6v6h-6z"/></svg>
      <span>Solution completed in ~145.1 seconds (160 seconds ago)</span>
      <span class="version">1.0.0007</span>
    </footer>
  </div>
</section>
</div>
</body>
</html>
```
FILE: styles.css
```css
*, *::before, *::after { box-sizing: border-box; }
body { margin: 0; background: #000; color: #dedede; font: 500 22px/28px Inter, "Liberation Sans", sans-serif; }
button, input, select { font: inherit; color: inherit; border: 0; padding: 0; margin: 0; background: none; }
.defs { position: absolute; width: 0; height: 0; }
.desktop { display: grid; grid-template-columns: 1064fr 24px 1472fr; height: 100vh; min-height: 1600px; }
.rhino, .gh, .gh-body, .view, .panel { display: flex; flex-direction: column; min-width: 0; min-height: 0; }

/* Rhino header */
.rhino-top { height: 78px; flex: none; display: flex; align-items: center; padding: 4px 12px 0 28px; background: #282828; border-bottom: 1px solid #000; }
.side-toggle { width: 40px; height: 40px; border: 2px solid #737373; border-left-width: 12px; }
.modes { display: flex; gap: 63px; margin-left: 130px; font-weight: 600; font-size: 25px; color: #737373; }
.modes .on { margin-left: -22px; background: #4e4e4e; color: #646464; border-radius: 8px; width: 144px; height: 32px; }
.chev { margin-left: auto; height: 22px; }
.chev svg { display: block; fill: none; stroke: #838383; stroke-width: 2; }

.rhino-main { flex: 1; display: grid; grid-template-columns: 260px 1fr; min-height: 0; }
.panel { background: #2c2c2c; }
.panel-head { height: 52px; flex: none; background: #323232; border-bottom: 2px solid #4a4a4a; }
.command { margin: 21px 17px 17px; height: 42px; flex: none; padding: 5px 7px 0; background: #363636; border: 1px solid #484848; border-bottom: 2px solid #666; font-size: 25px; font-weight: 400; }
.command::placeholder { color: #6c6c6c; opacity: 1; }
.tools { display: grid; grid-template-columns: repeat(4, 60px); grid-auto-rows: 60px; height: 598px; flex: none; border-bottom: 2px solid #808080; overflow: hidden; }
.tools button, .tools svg { display: block; width: 60px; height: 60px; }
.tools svg { fill: none; stroke: #b4b4b4; stroke-width: 2; }
.tools svg * { vector-effect: non-scaling-stroke; }
.tools use { stroke: none; }
.tools .dim { stroke: #777; }
.tools .seam { stroke-width: 1; }
.tools .bg { fill: #2c2c2c; }
.tools .navy { fill: #132c78; stroke: none; }

.snaps { padding: 11px 0 0 38px; display: flex; flex-direction: column; flex: none; }
.snaps + .snaps { padding-top: 10px; }
.snaps label { display: flex; align-items: center; gap: 8px; height: 36px; }
.snaps input { appearance: none; width: 24px; height: 24px; margin: 0 2px; border-radius: 5px; background: linear-gradient(#494949, #646464); box-shadow: 0 -1px #6a6a6a, 0 1px 2px #0008; display: grid; place-items: center; }
.snaps input[type=radio] { width: 28px; height: 28px; margin: 0; border-radius: 50%; }
.snaps input[type=radio]:checked::after { content: ""; width: 8px; height: 8px; border-radius: 50%; background: #fff; }
.snaps input[type=checkbox]:checked::after { content: ""; width: 17px; height: 10px; border: solid #fff; border-width: 0 0 3px 3px; transform: rotate(-48deg) translate(1px, -2px); }
.snaps .off { color: #606060; }
.snaps .off input { background: #424242; box-shadow: none; }

/* viewport */
.view { border-left: 2px solid #8a8a8a; border-right: 2px solid #8a8a8a; }
.views { height: 50px; flex: none; display: flex; align-items: center; background: #323232; position: relative; padding-left: 21px; font-size: 25px; font-weight: 400; color: #6c6c6c; }
.views .ico { width: 30px; height: 28px; margin-right: 34px; }
.views svg { display: block; fill: none; stroke: #6c6c6c; }
.views .dark { margin-right: 27px; }
.views .dark svg { stroke: #1c1c1c; }
.tab { height: 28px; line-height: 30px; border-left: 2px solid #808080; }
.tab.current { width: 223px; color: #1e1e1e; }
.tab.top { width: 125px; }
.tab.front { width: 145px; }
.tab.right { padding-left: 38px; }
.layouts { position: absolute; right: 22px; top: 14px; color: #bdbdbd; font-size: 24px; }
.viewport { flex: 1; position: relative; background: #9ca3aa; overflow: hidden; }
.view-name { display: inline-block; margin: 4px 2px; padding: 7px 8px 5px; font-weight: 700; line-height: 28px; background: #909090; color: #fff; width: 160px; font-size: 24px; }
.model { position: absolute; left: 138px; top: 512px; width: 380px; height: 380px; }
.axes { position: absolute; left: 64px; top: 1276px; width: 90px; height: 90px; fill: none; stroke: #5c5c5c; }
.axes text { fill: #5c5c5c; stroke: none; font-size: 26px; font-weight: 400; }

.rhino-status { height: 56px; flex: none; display: flex; align-items: center; background: #323232; border-top: 2px solid #000; padding: 1px 0 0 9px; }
.burger { width: 28px; display: grid; gap: 4px; }
.burger i { height: 2px; background: #aaa; }
.s { margin-left: 5px; }
.units { width: 147px; margin-left: 50px; }
.cplane { width: 139px; height: 32px; display: flex; align-items: center; justify-content: space-between; border: 2px solid #4e4e4e; border-radius: 8px; padding: 0 10px 0 13px; margin-right: 34px; }
.cplane select { appearance: none; color: #606060; }
.cplane svg { fill: none; stroke: #606060; stroke-width: 2; }
.n1 { width: 141px; }
.n2 { width: 150px; }

.divider { display: grid; justify-items: center; padding-top: 736px; align-content: start; }
.divider span { width: 8px; height: 128px; border-radius: 4px; background: #cfcfcf; }

/* ribbon */
.ribbon { height: 198px; flex: none; background: #616161; }
.ribbon-tabs { height: 45px; display: flex; gap: 25px; padding: 0 0 0 1px; overflow: hidden; white-space: nowrap; font: 400 23px/48px "Liberation Sans", Arial, sans-serif; color: #b9b9b9; }
.ribbon-tabs button { flex: none; height: 45px; }
.ribbon-tabs .active { width: 67px; margin-right: -13px; background: #858585; color: #f0f0f0; border: 2px solid #4b4b4b; border-width: 2px 2px 0 0; border-radius: 12px 12px 0 0; line-height: 38px; padding-bottom: 6px; }
.groups { height: 151px; margin-right: 2px; padding: 4px 6px; display: flex; gap: 8px; background: #848484; border-top: 1px solid #555; border-radius: 0 12px 12px 0; }
.group { height: 145px; border: 2px solid #b9b9b9; border-radius: 8px; padding: 1px 2px 0; box-shadow: inset 0 0 0 2px #555; display: flex; flex-direction: column; }
.icons { display: flex; height: 114px; }
.pair svg { display: block; width: 56px; height: 56px; }
.icons hr { width: 2px; height: 104px; margin: 5px 9px; border: 0; background: linear-gradient(#8880, #c4c4c4, #8880); }
.icons .w { fill: none; stroke: #fff; stroke-width: 2; }
.icons .w3 { stroke-width: 3; }
.icons .w4 { stroke-width: 4; }
.icons .w5 { stroke-width: 5; }
.glyph { font: 700 34px "Liberation Serif", serif; fill: #fff; text-anchor: middle; }
.glyph.small { font-size: 27px; }
.dial { font: 700 20px "Liberation Sans", sans-serif; fill: #999; text-anchor: middle; }
.dial.lower { font-size: 26px; fill: #222; }
.caption { height: 24px; padding-right: 18px; background: #6c6c6c; color: #2a2a2a; text-align: center; font: 20px/24px "Liberation Sans", Arial, sans-serif; position: relative; }
.caption::after { content: "✦"; position: absolute; right: 1px; top: 2px; color: #c8c8c8; font: 16px/24px "DejaVu Sans", sans-serif; }

/* Grasshopper body */
.gh { background: #2c2c2c; }
.gh-body { flex: 1; margin-top: 20px; border: 2px solid #646464; border-bottom: 0; background: #2c2c2c; }
.gh-tools { height: 79px; flex: none; display: flex; align-items: center; padding: 0 24px 2px 6px; }
.gh-tools > button { width: 64px; height: 38px; border-radius: 6px; background: #616161; box-shadow: inset 0 1px #777; flex: none; display: grid; place-items: center; }
.gh-tools > button svg { width: 32px; height: 32px; }
.gh-tools > button:first-child { margin-right: 16px; }
.gh-tools .bar { width: 2px; height: 32px; background: #444; margin: 0 10px 0 14px; flex: none; }
.gh-tools .bar.wide { margin: 0 20px; }
.gh-tools .bar.tight { margin: 0 10px; }
.zoombox { display: flex; width: 106px; height: 38px; background: #333; border: 1px solid #444; border-bottom-color: #777; flex: none; }
.zoombox input { width: 72px; padding-left: 7px; font-size: 23px; min-width: 0; }
.zoombox button { width: 34px; background: #1f68dc; border-radius: 0 5px 5px 0; display: grid; place-items: center; }
.zoombox path { fill: none; stroke: #fff; stroke-width: 3; }
.gh-tools > .fit { margin-left: 18px; }
.gh-tools > .eye { margin-left: 34px; }
.gh-tools > .sketch { margin-left: 32px; }
.gh-tools .grow { flex: 1; }
.gh-tools > .gap { margin-left: 14px; }
.gh-tools > .near { margin-left: 12px; }
.gh-tools > .chosen { background: #1f68dc; }

/* canvas */
.canvas { flex: 1; position: relative; overflow: hidden; background: #b1ce79; color: #000; border-bottom: 2px solid #646464; min-height: 0; }
.wires { position: absolute; left: 0; top: 0; fill: none; }
.grid { stroke: #a7c471; stroke-width: 3; }
.wire { stroke: #000; stroke-opacity: .6; stroke-width: 7; }
.dashed { stroke: #000; stroke-opacity: .6; stroke-width: 12; stroke-linecap: round; stroke-dasharray: 23 18; }
.hot { stroke: #f04a20; stroke-opacity: .78; stroke-width: 7; }
.node { position: absolute; display: flex; align-items: stretch; height: 104px; width: 138px; padding: 3px 0; border: 2px solid #26262c; border-radius: 8px; background: linear-gradient(#e9e9ee, #c6c6cf 20px, #a7a6b5 20px, #8f8e9c); box-shadow: inset 0 0 0 2px #ffffff55, 0 -1px 0 2px #ffffffa0, 0 0 2px 3px #ffffff50; font-size: 24px; font-weight: 400; }
.in, .out { display: flex; flex-direction: column; }
.in { width: 36px; }
.out { flex: 1; }
.in b, .out b { flex: 1; display: flex; align-items: center; position: relative; font-weight: 400; padding-top: 2px; }
.in b { justify-content: flex-end; padding-right: 7px; }
.out b { padding-left: 5px; }
.in b::before, .out b::after { content: ""; position: absolute; top: calc(50% - 11px); width: 12px; height: 22px; border: 4px solid #000; background: #fff; }
.in b::before { left: -13px; border-right: 0; border-radius: 11px 0 0 11px; }
.out b::after { right: -13px; border-left: 0; border-radius: 0 11px 11px 0; }
.name { width: 58px; margin: -1px 0; border: 3px solid #000; border-radius: 8px; background: linear-gradient(#b4b4b4, #8c8c8c 12px, #484848 12px, #333); box-shadow: 0 0 0 1px #ffffff60; color: #fff; display: grid; place-items: center; font-weight: 800; font-size: 28px; }
.name span { writing-mode: vertical-rl; transform: rotate(180deg); line-height: 32px; white-space: nowrap; }
.plain { flex: 1; display: grid; place-items: center; padding-top: 2px; }
.n-wb { left: 138px; top: -30px; width: 143px; height: 249px; }
.n-wb .in { width: 38px; }
.n-mesh { left: 488px; top: -54px; width: 136px; }
.n-geo { left: 805px; top: 199px; width: 119px; height: 49px; }
.n-geo .in, .n-geo .out, .n-panel .in, .n-panel .out, .n-list .out { width: 0; flex: none; }
.n-geo b, .n-panel b, .n-list b { padding: 0; }
.n-gate1 { left: 1040px; top: 193px; }
.n-list { left: 51px; top: 444px; width: 181px; height: 53px; background: linear-gradient(#f6f6f6, #e2e2e2 20px, #d8d8d8 20px, #c6c6c6); }
.n-list select { appearance: none; width: 137px; padding: 2px 0 0 11px; }
.n-list svg { margin-top: 6px; margin-right: 6px; fill: #333; stroke: #000; stroke-width: 3; }
.n-list .out { margin-left: auto; }
.n-gate2 { left: 446px; top: 761px; }
.n-scale { left: 934px; top: 761px; width: 140px; height: 151px; }
.n-slider { left: 509px; top: 914px; width: 495px; height: 49px; padding: 0; }
.slider-name { width: 211px; border-right: 2px solid #222; padding: 10px 0 0 9px; white-space: nowrap; }
.track { flex: 1; display: flex; background: linear-gradient(#eee, #c6c6c6); border-radius: 0 6px 6px 0; padding: 8px 0 0 20px; }
.track svg { fill: none; stroke: #a8a8a8; stroke-width: 2; flex: none; }
.track output { margin: 2px 0 0 -28px; }
.n-xz { left: 929px; top: 923px; height: 66px; }
.n-panel { left: 509px; top: 967px; width: 378px; height: 49px; background: #fff766; box-shadow: inset 0 0 0 3px #fffbb0, 0 -1px 0 2px #ffffffa0; font: 19px/24px "Liberation Mono", monospace; }
.n-panel .plain { padding-right: 20px; }
.n-rotate { left: 1188px; top: 773px; width: 140px; height: 151px; }
.n-rotate2 { left: 1410px; top: 823px; width: 140px; height: 151px; }
.n-edge { left: -60px; top: 1181px; width: 73px; height: 56px; border-radius: 3px; border-color: #000; background: linear-gradient(#d8d8d8, #aaa 20px, #808080 20px); box-shadow: none; }
.tip { position: absolute; left: 305px; top: 566px; width: 390px; height: 112px; padding: 2px; background: #fff; border: 1px solid #000; box-shadow: 0 12px 30px #0006; font-weight: 400; }
.tip-head { height: 67px; display: flex; align-items: center; padding-left: 11px; background: #ffd066; font-size: 22px; white-space: nowrap; }
.tip-head em { margin-left: 22px; }
.tip p { margin: 0; height: 39px; padding: 7px 0 0 8px; background: #fffdcf; font-size: 17px; line-height: 28px; }
.compass { position: absolute; left: 1350px; top: 1113px; width: 110px; height: 110px; }

.gh-status { height: 62px; flex: none; display: flex; align-items: center; gap: 4px; padding: 0 119px 2px 6px; font-size: 24px; font-weight: 400; }
.version { margin-left: auto; }
```
